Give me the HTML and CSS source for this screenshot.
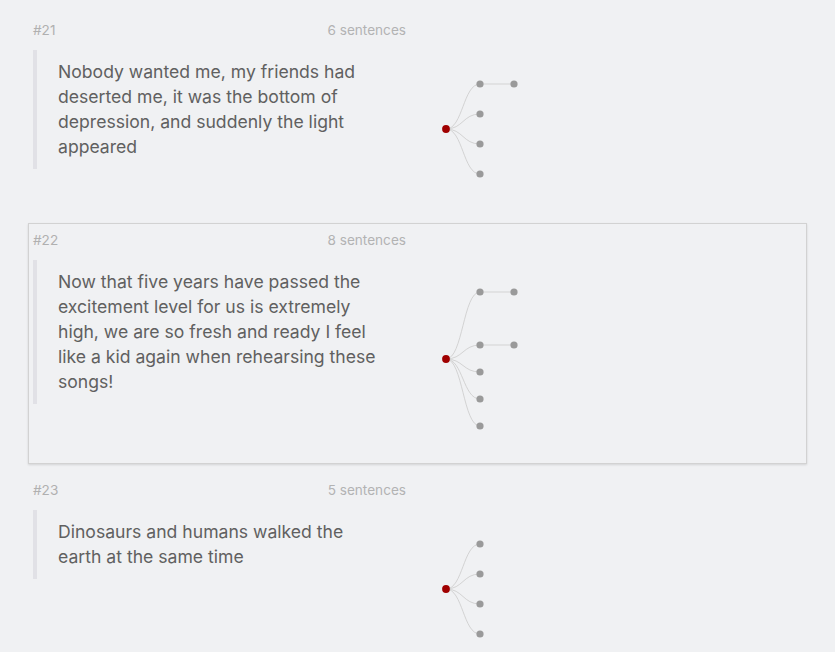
FILE: index.html
```html
<!DOCTYPE html>
<html>
<head>
<meta charset="utf-8">
<link rel="stylesheet" href="styles.css">
</head>
<body>
<div class="list">
  <div class="item">
    <div class="head"><span class="num">#21</span><span class="count">6 sentences</span></div>
    <div class="body">
      <div class="col"><blockquote class="quote">Nobody wanted me, my friends had deserted me, it was the bottom of depression, and suddenly the light appeared</blockquote></div>
      <svg class="tree" width="200" height="168" viewBox="0 0 200 168">
        <g class="links">
          <path d="M40,84C57,84 57,39 74,39"/>
          <path d="M40,84C57,84 57,69 74,69"/>
          <path d="M40,84C57,84 57,99 74,99"/>
          <path d="M40,84C57,84 57,129 74,129"/>
          <path d="M74,39L108,39"/>
        </g>
        <g class="nodes">
          <circle cx="74" cy="39" r="3.6"/><circle cx="74" cy="69" r="3.6"/><circle cx="74" cy="99" r="3.6"/><circle cx="74" cy="129" r="3.6"/><circle cx="108" cy="39" r="3.6"/>
          <circle class="root" cx="40" cy="84" r="3.9"/>
        </g>
      </svg>
    </div>
  </div>
  <div class="item selected">
    <div class="head"><span class="num">#22</span><span class="count">8 sentences</span></div>
    <div class="body">
      <div class="col"><blockquote class="quote">Now that five years have passed the excitement level for us is extremely high, we are so fresh and ready I feel like a kid again when rehearsing these songs!</blockquote></div>
      <svg class="tree" width="200" height="208" viewBox="0 0 200 208">
        <g class="links">
          <path d="M40,104C57,104 57,37 74,37"/>
          <path d="M40,104C57,104 57,90 74,90"/>
          <path d="M40,104C57,104 57,117 74,117"/>
          <path d="M40,104C57,104 57,144 74,144"/>
          <path d="M40,104C57,104 57,171 74,171"/>
          <path d="M74,37L108,37"/>
          <path d="M74,90L108,90"/>
        </g>
        <g class="nodes">
          <circle cx="74" cy="37" r="3.6"/><circle cx="74" cy="90" r="3.6"/><circle cx="74" cy="117" r="3.6"/><circle cx="74" cy="144" r="3.6"/><circle cx="74" cy="171" r="3.6"/><circle cx="108" cy="37" r="3.6"/><circle cx="108" cy="90" r="3.6"/>
          <circle class="root" cx="40" cy="104" r="3.9"/>
        </g>
      </svg>
    </div>
  </div>
  <div class="item">
    <div class="head"><span class="num">#23</span><span class="count">5 sentences</span></div>
    <div class="body">
      <div class="col"><blockquote class="quote">Dinosaurs and humans walked the earth at the same time</blockquote></div>
      <svg class="tree" width="200" height="168" viewBox="0 0 200 168">
        <g class="links">
          <path d="M40,84C57,84 57,39 74,39"/>
          <path d="M40,84C57,84 57,69 74,69"/>
          <path d="M40,84C57,84 57,99 74,99"/>
          <path d="M40,84C57,84 57,129 74,129"/>
        </g>
        <g class="nodes">
          <circle cx="74" cy="39" r="3.6"/><circle cx="74" cy="69" r="3.6"/><circle cx="74" cy="99" r="3.6"/><circle cx="74" cy="129" r="3.6"/>
          <circle class="root" cx="40" cy="84" r="3.9"/>
        </g>
      </svg>
    </div>
  </div>
</div>
</body>
</html>
```
FILE: styles.css
```css
html, body {
  margin: 0;
  padding: 0;
  background: #f0f1f3;
}
body {
  font-family: Inter, "Open Sans", sans-serif;
  height: 652px;
  overflow: hidden;
}
.list {
  padding: 13px 28px 0 28px;
  width: 779px;
}
.item {
  border: 1px solid transparent;
  padding: 0 4px;
  margin-bottom: 9px;
  background: #f0f1f3;
}
.item.selected {
  border-color: #d2d2d2;
  box-shadow: 0 1px 2px rgba(0,0,0,0.12);
}
.head {
  width: 373px;
  height: 31px;
  display: flex;
  justify-content: space-between;
  align-items: center;
  font-size: 13.6px;
  color: #b3b3b3;
}
.num { color: #b0b0b0; }
.body {
  display: flex;
  align-items: flex-start;
}
.col {
  width: 373px;
  flex: none;
}
.quote {
  margin: 5px 0 0 0;
  border-left: 4px solid #e1e1e6;
  padding: 9px 20px 10px 21px;
  font-size: 17.6px;
  line-height: 25px;
  color: #606060;
}
.tree { flex: none; display: block; }
.links path {
  fill: none;
  stroke: #d3d3d3;
  stroke-width: 1;
}
.nodes circle { fill: #9a9a9a; }
.nodes circle.root { fill: #a00000; }
```
